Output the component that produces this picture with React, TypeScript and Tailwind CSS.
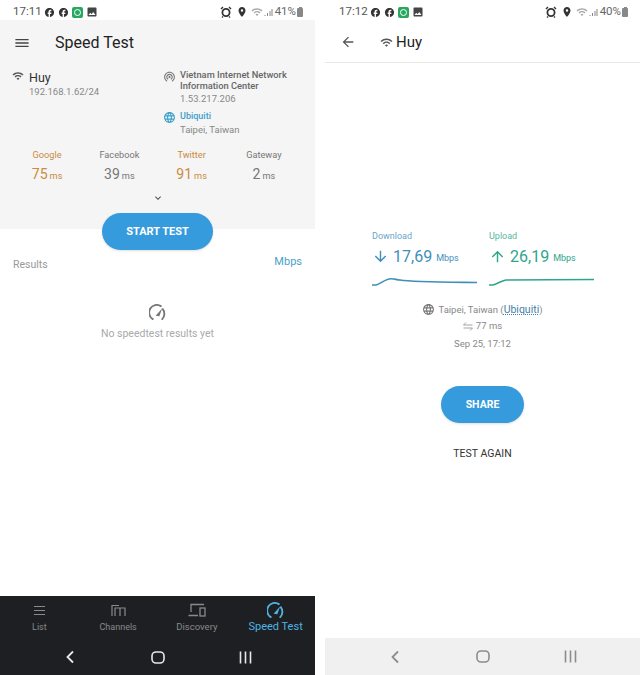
import React from 'react';
import {
  MdArrowBack,
  MdArrowDownward,
  MdArrowUpward,
  MdFacebook,
  MdImage,
  MdKeyboardArrowDown,
  MdLanguage,
  MdLocationOn,
  MdMenu,
  MdWifi,
  MdWifiTethering,
} from 'react-icons/md';

const Gauge = ({ size, className }: { size: number; className: string }) => (
  <svg width={size} height={size} viewBox="0 0 18 18" fill="none" stroke="currentColor" className={className}>
    <path d="M4 16A8 8 0 0 1 12.5 2.2" strokeWidth="2" strokeLinecap="round" />
    <path d="M14.6 5.5A8 8 0 0 1 14 16" strokeWidth="2" strokeLinecap="round" />
    <path d="M7 12.5 14 4.5 11 13Z" fill="currentColor" stroke="none" />
  </svg>
);

const StatusBar = ({ time, level, className }: { time: string; level: string; className: string }) => (
  <div className={`flex h-5 items-center pt-[4px] text-[#555] ${className}`}>
    <span className="text-[11.5px] w-[31px]">{time}</span>
    <MdFacebook size={11} className="text-[#333]" />
    <MdFacebook size={11} className="ml-[3px] text-[#333]" />
    <span className="ml-[3px] flex h-[11px] w-[11px] items-center justify-center rounded-[2px] bg-[#27a85f]">
      <span className="h-[7px] w-[7px] rounded-full border border-white" />
    </span>
    <MdImage size={12} className="ml-[3px] text-[#444]" />
    <div className="ml-auto flex items-center">
      <svg width="12" height="12" viewBox="0 0 12 12" className="text-[#333]">
        <circle cx="6" cy="6.5" r="3.6" fill="none" stroke="currentColor" strokeWidth="1.8" />
        <path d="M1 3 3 1M11 3 9 1M3 10.5 2 11.5M9 10.5 10 11.5" stroke="currentColor" strokeWidth="1.4" />
      </svg>
      <MdLocationOn size={12} className="ml-[4px] text-[#333]" />
      <MdWifi size={12} className="ml-[3px] text-[#aaa]" />
      <svg width="9" height="9" viewBox="0 0 9 9" className="ml-[1px]">
        <path d="M1 8V7M3.5 8V5M6 8V3M8 8V1" stroke="#888" strokeWidth="1" />
      </svg>
      <span className="ml-[2px] text-[11.5px] text-[#666]">{level}%</span>
      <span className="ml-[1px] flex h-[10px] w-[6px] flex-col items-center">
        <span className="h-[1px] w-[3px] bg-[#888]" />
        <span className="w-full flex-1 rounded-[1px] bg-[#888]" />
      </span>
    </div>
  </div>
);

const Ping = ({ name, value, warm }: { name: string; value: string; warm?: boolean }) => (
  <div className={`flex flex-col items-center ${warm ? 'text-[#c98b3e]' : 'text-[#777]'}`}>
    <span className="text-[9.2px] leading-3">{name}</span>
    <span className="mt-[3px] leading-5">
      <span className="text-[14px]">{value}</span>
      <span className="ml-[2px] text-[9.2px]">ms</span>
    </span>
  </div>
);

const ChannelsIcon = () => (
  <svg width="15" height="13" viewBox="0 0 15 13" fill="none" stroke="#8a8a8a" strokeWidth="1.2">
    <path d="M1 12V1.5H8M4 12V4H14V12M9 4V12" />
  </svg>
);

const DiscoveryIcon = () => (
  <svg width="18" height="14" viewBox="0 0 18 14" fill="none" stroke="#8a8a8a" strokeWidth="1.3">
    <path d="M3 9V1.5H16M0.5 12.5H10" />
    <rect x="12" y="5" width="5" height="8" />
  </svg>
);

const Tab = ({ icon, label, labelSize, active }: { icon: React.ReactNode; label: string; labelSize: string; active?: boolean }) => (
  <div className={`flex flex-col items-center ${active ? 'text-[#4fb3e0]' : 'text-[#8a8a8a]'}`}>
    <div className="flex h-[18px] items-center">{icon}</div>
    <span className={`mt-[2px] leading-3 ${labelSize}`}>{label}</span>
  </div>
);

const NavKeys = ({ color, className }: { color: string; className: string }) => (
  <div className={`flex items-center ${className}`}>
    <svg width="10" height="14" viewBox="0 0 10 14" fill="none" stroke={color} strokeWidth="1.8" className="ml-[65px]">
      <path d="M8 1.5 2.5 7 8 12.5" />
    </svg>
    <svg width="14" height="13" viewBox="0 0 14 13" fill="none" stroke={color} strokeWidth="1.6" className="ml-[76px]">
      <rect x="1" y="1" width="12" height="11" rx="4" />
    </svg>
    <svg width="13" height="13" viewBox="0 0 13 13" fill="none" stroke={color} strokeWidth="1.6" className="ml-[74px]">
      <path d="M1.5 0.5V12.5M6.5 0.5V12.5M11.5 0.5V12.5" />
    </svg>
  </div>
);

const Result = ({
  label,
  value,
  up,
  color,
  line,
}: {
  label: string;
  value: string;
  up?: boolean;
  color: string;
  line: string;
}) => {
  const Arrow = up ? MdArrowUpward : MdArrowDownward;
  return (
    <div className="w-[105px]" style={{ color }}>
      <div className="text-[9px] leading-3 opacity-80">{label}</div>
      <div className="mt-[1px] flex items-center leading-6">
        <Arrow size={17} />
        <span className="ml-[4px] text-[16px]">{value}</span>
        <span className="ml-[4px] mt-[3px] text-[9px]">Mbps</span>
      </div>
      <svg width="105" height="14" viewBox="0 0 105 14" fill="none" className="mt-[5px]">
        <path d={line} stroke={color} strokeWidth="1.6" />
      </svg>
    </div>
  );
};

export default function App() {
  return (
    <div className="flex h-[675px] w-[640px] bg-white font-['Roboto',sans-serif]">
      {/* left phone */}
      <div className="flex w-[315px] flex-col">
        <StatusBar time="17:11" level="41" className="pl-[13px] pr-[12px]" />

        <div className="relative h-[209px] bg-[#f5f5f5]">
          <div className="flex h-[43px] items-center pl-[14px] pt-[2px]">
            <MdMenu size={16} className="text-[#444] scale-x-110" />
            <span className="ml-[25px] text-[16px] text-[#222]">Speed Test</span>
          </div>

          <div className="mt-[6px] flex">
            <div className="flex w-[163px] pl-[12px]">
              <MdWifi size={12} className="mt-[1px] text-[#555]" />
              <div className="ml-[5px]">
                <div className="text-[12.5px] leading-[17px] text-[#333]">Huy</div>
                <div className="text-[9.5px] leading-3 text-[#888]">192.168.1.62/24</div>
              </div>
            </div>
            <div>
              <div className="flex">
                <MdWifiTethering size={13} className="mt-[1px] text-[#777]" />
                <div className="ml-[4px]">
                  <div className="text-[9.3px] font-medium leading-[11px] text-[#666]">
                    Vietnam Internet Network
                    <br />
                    Information Center
                  </div>
                  <div className="mt-[2px] text-[9.5px] leading-3 text-[#888]">1.53.217.206</div>
                </div>
              </div>
              <div className="mt-[5px] flex">
                <MdLanguage size={13} className="mt-[1px] text-[#3b9fcb]" />
                <div className="ml-[4px]">
                  <div className="text-[9px] font-medium leading-[13px] text-[#3b9fcb]">Ubiquiti</div>
                  <div className="text-[9.5px] leading-[13px] text-[#888]">Taipei, Taiwan</div>
                </div>
              </div>
            </div>
          </div>

          <div className="mt-[13px] grid grid-cols-4 pl-[11px] pr-[15px]">
            <Ping name="Google" value="75" warm />
            <Ping name="Facebook" value="39" />
            <Ping name="Twitter" value="91" warm />
            <Ping name="Gateway" value="2" />
          </div>

          <div className="mt-[6px] flex justify-center">
            <MdKeyboardArrowDown size={12} className="text-[#555]" />
          </div>

          <button className="absolute left-[102px] top-[193px] h-[37px] w-[111px] rounded-full bg-[#359bdc] pt-[1px] text-[11px] font-bold text-white shadow-sm">
            START TEST
          </button>
        </div>

        <div className="flex flex-1 flex-col">
          <div className="mt-[26px] flex items-start justify-between pl-[13px] pr-[13px]">
            <span className="mt-[3px] text-[10.5px] leading-[14px] text-[#999]">Results</span>
            <span className="text-[11px] leading-[14px] text-[#4a9fc9]">Mbps</span>
          </div>
          <div className="mt-[32px] flex flex-col items-center">
            <Gauge size={17} className="text-[#777]" />
            <span className="mt-[6px] text-[10.5px] leading-[14px] text-[#aaa]">No speedtest results yet</span>
          </div>
        </div>

        <div className="h-[79px] bg-[#1d1f23]">
          <div className="grid grid-cols-4 pt-[5px]">
            <Tab
              label="List"
              labelSize="text-[9px]"
              icon={
                <svg width="11" height="11" viewBox="0 0 11 11" stroke="#8a8a8a" strokeWidth="1.1">
                  <path d="M0 1.5H11M0 5.5H11M0 9.5H11" />
                </svg>
              }
            />
            <Tab label="Channels" labelSize="text-[9px]" icon={<ChannelsIcon />} />
            <Tab label="Discovery" labelSize="text-[9.5px]" icon={<DiscoveryIcon />} />
            <Tab label="Speed Test" labelSize="text-[11px]" active icon={<Gauge size={17} className="" />} />
          </div>
          <NavKeys color="#e8e8e8" className="mt-[17px]" />
        </div>
      </div>

      {/* right phone */}
      <div className="ml-[10px] flex w-[315px] flex-col">
        <StatusBar time="17:12" level="40" className="pl-[14px] pr-[12px]" />

        <div className="flex h-[43px] items-center border-b border-[#e8e8e8] pl-[15px] pt-[2px]">
          <MdArrowBack size={16} className="text-[#555]" />
          <MdWifi size={13} className="ml-[24px] text-[#555]" />
          <span className="ml-[3px] text-[15px] text-[#222]">Huy</span>
        </div>

        <div className="flex flex-1 flex-col items-center">
          <div className="mt-[167px] flex w-full pl-[47px]">
            <Result
              label="Download"
              value="17,69"
              color="#3f8fb8"
              line="M0 10H4C8 9 12 5 17 4C22 3 24 5 28 5C40 7 60 7 105 7.5"
            />
            <div className="w-[12px]" />
            <Result
              label="Upload"
              value="26,19"
              up
              color="#2fa58a"
              line="M0 10H4C8 9 12 6 17 5C30 5 60 5 105 4.5"
            />
          </div>

          <div className="mt-[14px] flex items-center text-[9.5px] leading-3 text-[#888]">
            <MdLanguage size={13} className="text-[#777]" />
            <span className="ml-[3px]">
              Taipei, Taiwan (
              <span className="text-[10.5px] text-[#3f7fa8] underline decoration-dotted">Ubiquiti</span>)
            </span>
          </div>
          <div className="mt-[4px] flex items-center text-[9.5px] leading-3 text-[#888]">
            <svg width="10" height="9" viewBox="0 0 10 9" fill="none" stroke="#999" strokeWidth="0.9">
              <path d="M3 .5 .5 3H9.5M7 8.5 9.5 6H.5" />
            </svg>
            <span className="ml-[3px]">77 ms</span>
          </div>
          <div className="mt-[6px] text-[9.5px] leading-3 text-[#888]">Sep 25, 17:12</div>

          <button className="mt-[36px] h-[37px] w-[83px] rounded-full bg-[#359bdc] text-[10.5px] font-bold text-white shadow-sm">
            SHARE
          </button>
          <div className="mt-[25px] text-[10.5px] leading-3 text-[#333]">TEST AGAIN</div>
        </div>

        <div className="flex h-[37px] items-center bg-[#f0f0f0]">
          <NavKeys color="#8c8c8c" className="" />
        </div>
      </div>
    </div>
  );
}
